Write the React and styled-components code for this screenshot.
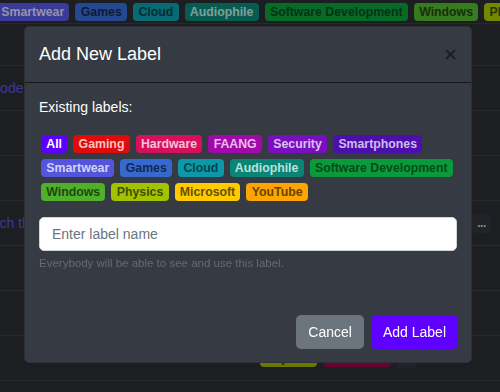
import React from "react";
import styled, { createGlobalStyle } from "styled-components";

const Global = createGlobalStyle`
  html, body { margin: 0; padding: 0; }
  body {
    background: #2a2c31;
    font-family: "Liberation Sans", Arial, sans-serif;
    font-size: 14px;
    color: #dee2e6;
    overflow: hidden;
    width: 500px;
    height: 392px;
  }
`;

const LABELS = [
  { name: "All", bg: "#5b00ff", fg: "#ffffff" },
  { name: "Gaming", bg: "#e00b0b", fg: "#fbc2c2" },
  { name: "Hardware", bg: "#d6105c", fg: "#f8c0d5" },
  { name: "FAANG", bg: "#a10aa8", fg: "#ecbdf0" },
  { name: "Security", bg: "#7a0fbf", fg: "#dcc0f2" },
  { name: "Smartphones", bg: "#4c0fae", fg: "#cdbcef" },
  { name: "Smartwear", bg: "#5454dc", fg: "#d3d3f8" },
  { name: "Games", bg: "#3569cf", fg: "#13284f" },
  { name: "Cloud", bg: "#0c98a8", fg: "#04434b" },
  { name: "Audiophile", bg: "#0a8575", fg: "#b6e3dc" },
  { name: "Software Development", bg: "#0b9a3a", fg: "#044a1a" },
  { name: "Windows", bg: "#50b02c", fg: "#1f4711" },
  { name: "Physics", bg: "#a3c300", fg: "#414e00" },
  { name: "Microsoft", bg: "#ffcb00", fg: "#665100" },
  { name: "YouTube", bg: "#ffa400", fg: "#664200" },
];

const Page = styled.div`
  width: 500px;
  height: 392px;
  overflow: hidden;
`;

const TopBar = styled.div`
  display: flex;
  gap: 6px;
  padding: 3px 0 2px;
  margin-left: -4px;
  border-bottom: 1px solid #3a3c42;
  white-space: nowrap;
`;

const Badge = styled.span`
  display: inline-flex;
  align-items: center;
  flex: none;
  height: 18px;
  padding: 0 5.3px;
  border-radius: 4px;
  font-size: 12.3px;
  font-weight: 700;
  line-height: 1;
  background: ${(p) => p.$bg};
  color: ${(p) => p.$fg};
`;

const Row = styled.div`
  height: ${(p) => p.$h || 44}px;
  border-bottom: 1px solid #3a3c42;
  display: flex;
  align-items: center;
  justify-content: ${(p) => p.$justify || "flex-start"};
  gap: 6px;
  padding: 0 9px 0 0;
  white-space: nowrap;
`;

const RowLink = styled.span`
  color: #574fd8;
  font-size: 14px;
  margin-left: ${(p) => p.$shift || 0}px;
`;

const MoreButton = styled.span`
  width: 19px;
  height: 19px;
  border-radius: 4px;
  background: #30333a;
  color: #c8c8c8;
  font-size: 12px;
  font-weight: 700;
  display: flex;
  align-items: center;
  justify-content: center;
  letter-spacing: -0.5px;
`;

const Backdrop = styled.div`
  position: fixed;
  inset: 0;
  background: rgba(0, 0, 0, 0.3);
`;

const Modal = styled.div`
  position: fixed;
  top: 26px;
  left: 24px;
  width: 448px;
  box-sizing: border-box;
  background: #363a42;
  border: 1px solid #2e3137;
  border-radius: 5px;
  display: flex;
  flex-direction: column;
`;

const Header = styled.div`
  display: flex;
  align-items: center;
  justify-content: space-between;
  padding: 14px 15px 14px 14px;
  border-bottom: 1px solid #18191c;
`;

const Title = styled.h5`
  margin: 0;
  font-size: 18px;
  font-weight: 400;
  line-height: 1.5;
  color: #ffffff;
`;

const Close = styled.button`
  width: 12px;
  height: 14px;
  padding: 0;
  border: 0;
  background: transparent;
  display: flex;
  align-items: center;
  justify-content: center;
  opacity: 0.75;
`;

const Body = styled.div`
  padding: 14px;
  display: flex;
  flex-direction: column;
`;

const Text = styled.p`
  margin: 0;
  font-size: 14px;
  line-height: 1.5;
  color: #ffffff;
`;

const BadgeList = styled.div`
  display: flex;
  flex-wrap: wrap;
  gap: 6px 6px;
  margin: 17px 0 0 2px;
`;

const Input = styled.input`
  margin-top: 16px;
  height: 34px;
  box-sizing: border-box;
  border: 1px solid #ced4da;
  border-radius: 5px;
  padding: 0 12px;
  font-family: inherit;
  font-size: 14px;
  background: #ffffff;
  color: #212529;
  outline: none;
  &::placeholder { color: #6c757d; }
`;

const Help = styled.div`
  margin-top: 4px;
  font-size: 11.5px;
  line-height: 1.5;
  color: #646b74;
`;

const Footer = styled.div`
  display: flex;
  justify-content: flex-end;
  gap: 7px;
  padding: 29px 13px 13px;
`;

const Button = styled.button`
  height: 34px;
  padding: 0 12px;
  border: 0;
  border-radius: 5px;
  font-family: inherit;
  font-size: 14px;
  color: #ffffff;
  background: ${(p) => (p.$primary ? "#5e00ff" : "#6c757d")};
`;

export default function App() {
  const top = LABELS.slice(6, 13);
  return (
    <>
      <Global />
      <Page>
        <TopBar>
          {top.map((l) => (
            <Badge key={l.name} $bg={l.bg} $fg={l.fg}>{l.name}</Badge>
          ))}
        </TopBar>
        <Row $h={41} />
        <Row><RowLink $shift={-10}>Node codebase overview</RowLink></Row>
        <Row />
        <Row />
        <Row $justify="space-between">
          <RowLink $shift={-30}>Search the docs</RowLink>
          <MoreButton>...</MoreButton>
        </Row>
        <Row />
        <Row />
        <Row $justify="flex-end">
          <Badge $bg="#98ab00" $fg="#404a00" style={{ width: 47 }}>Physics</Badge>
          <Badge $bg="#9a0048" $fg="#f0b0c8" style={{ width: 57 }}>Hardware</Badge>
          <MoreButton style={{ marginRight: 75 }} />
        </Row>
      </Page>
      <Backdrop />
      <Modal>
        <Header>
          <Title>Add New Label</Title>
          <Close aria-label="Close">
            <svg width="11" height="11" viewBox="0 0 11 11">
              <path d="M1 1L10 10M10 1L1 10" stroke="#15161a" strokeWidth="2" />
            </svg>
          </Close>
        </Header>
        <Body>
          <Text>Existing labels:</Text>
          <BadgeList>
            {LABELS.map((l) => (
              <Badge key={l.name} $bg={l.bg} $fg={l.fg}>{l.name}</Badge>
            ))}
          </BadgeList>
          <Input placeholder="Enter label name" />
          <Help>Everybody will be able to see and use this label.</Help>
        </Body>
        <Footer>
          <Button>Cancel</Button>
          <Button $primary>Add Label</Button>
        </Footer>
      </Modal>
    </>
  );
}
